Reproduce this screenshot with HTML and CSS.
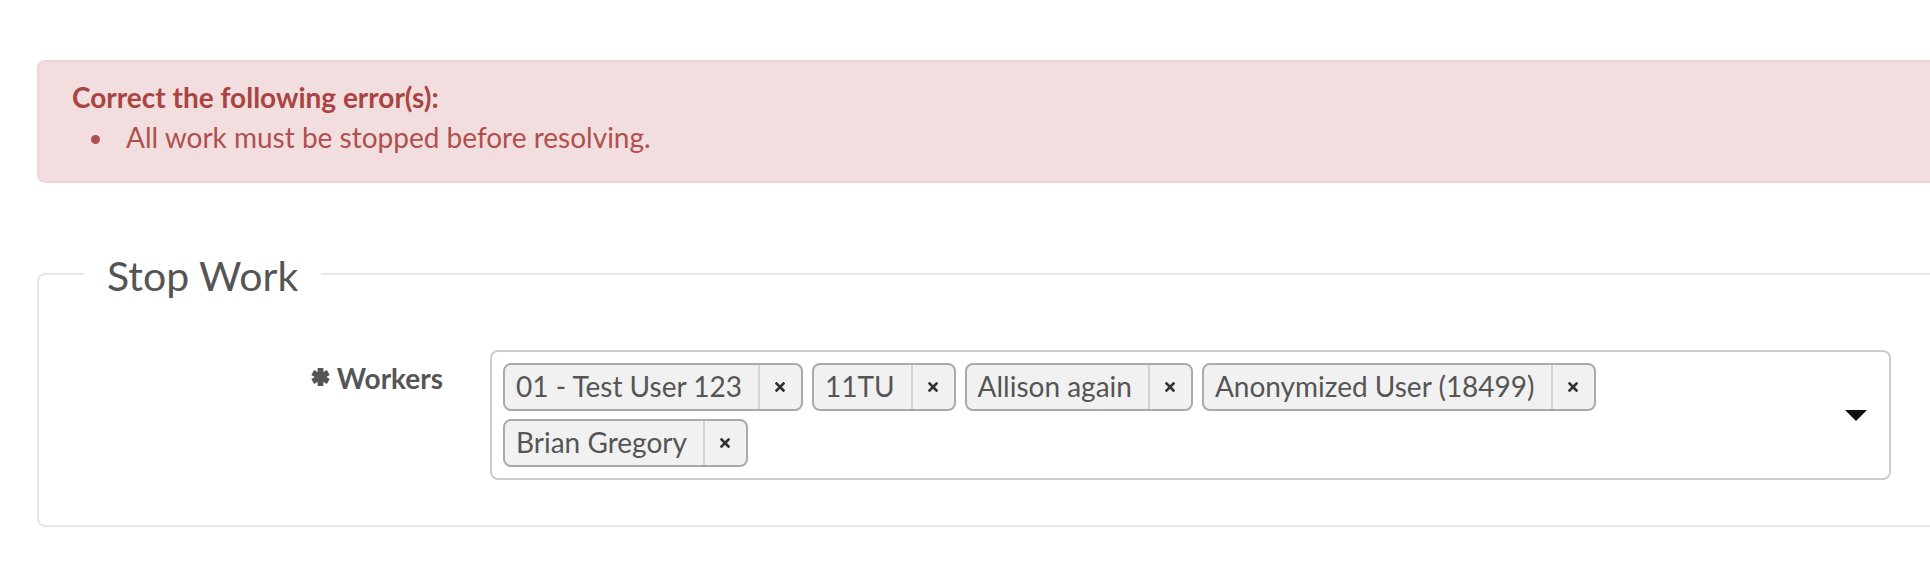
FILE: index.html
```html
<!DOCTYPE html>
<html lang="en">
<head>
<meta charset="utf-8">
<title>Stop Work</title>
<link rel="stylesheet" href="styles.css">
</head>
<body>
<div class="page">
  <div class="alert">
    <div class="alert-title">Correct the following error(s):</div>
    <ul class="alert-list">
      <li>All work must be stopped before resolving.</li>
    </ul>
  </div>

  <fieldset class="panel">
    <legend class="panel-title">Stop Work</legend>
    <div class="form-row">
      <label class="form-label">
        <svg class="req-icon" viewBox="0 0 20 20" width="19" height="20" aria-hidden="true">
          <g stroke="#555" stroke-width="6">
            <line x1="10" y1="0.5" x2="10" y2="19.5"/>
            <line x1="1.8" y1="5.25" x2="18.2" y2="14.75"/>
            <line x1="1.8" y1="14.75" x2="18.2" y2="5.25"/>
          </g>
        </svg><span class="form-label-text">Workers</span>
      </label>
      <div class="multi-select">
        <ul class="chips">
          <li class="chip"><span class="chip-text">01 - Test User 123</span><span class="chip-remove"><svg viewBox="0 0 10 10" width="10" height="10"><path d="M1.5 1.5L8.5 8.5M8.5 1.5L1.5 8.5" stroke="#333" stroke-width="2.6" stroke-linecap="square"/></svg></span></li>
          <li class="chip"><span class="chip-text">11TU</span><span class="chip-remove"><svg viewBox="0 0 10 10" width="10" height="10"><path d="M1.5 1.5L8.5 8.5M8.5 1.5L1.5 8.5" stroke="#333" stroke-width="2.6" stroke-linecap="square"/></svg></span></li>
          <li class="chip"><span class="chip-text">Allison again</span><span class="chip-remove"><svg viewBox="0 0 10 10" width="10" height="10"><path d="M1.5 1.5L8.5 8.5M8.5 1.5L1.5 8.5" stroke="#333" stroke-width="2.6" stroke-linecap="square"/></svg></span></li>
          <li class="chip"><span class="chip-text">Anonymized User (18499)</span><span class="chip-remove"><svg viewBox="0 0 10 10" width="10" height="10"><path d="M1.5 1.5L8.5 8.5M8.5 1.5L1.5 8.5" stroke="#333" stroke-width="2.6" stroke-linecap="square"/></svg></span></li>
          <li class="chip"><span class="chip-text">Brian Gregory</span><span class="chip-remove"><svg viewBox="0 0 10 10" width="10" height="10"><path d="M1.5 1.5L8.5 8.5M8.5 1.5L1.5 8.5" stroke="#333" stroke-width="2.6" stroke-linecap="square"/></svg></span></li>
        </ul>
        <span class="caret"></span>
      </div>
    </div>
  </fieldset>
</div>
</body>
</html>
```
FILE: styles.css
```css
html, body {
  margin: 0;
  padding: 0;
  overflow: hidden;
  background: #fff;
}

body {
  font-family: Lato, "Open Sans", sans-serif;
  font-size: 28px;
  line-height: 40px;
  color: #555;
}

.page {
  padding: 60px 0 0 37px;
  margin-right: -40px;
}

/* Error alert */
.alert {
  background: #f2dede;
  border: 2px solid #eed3d7;
  border-radius: 8px;
  color: #a94442;
  padding: 15px 33px 24px;
}

.alert-title {
  font-weight: 700;
}

.alert-list {
  margin: 0;
  padding-left: 44px;
  list-style: disc;
}

.alert-list li {
  padding-left: 10px;
  color: #b0504e;
}

/* Fieldset panel */
.panel {
  margin: 67px 0 0;
  padding: 52px 77px 45px 45px;
  border: 2px solid #e6e6e6;
  border-radius: 8px;
  min-width: 0;
}

.panel-title {
  padding: 4px 23px 0;
  font-size: 41px;
  line-height: 44px;
  color: #555;
}

.form-row {
  display: flex;
  align-items: flex-start;
}

.form-label {
  box-sizing: border-box;
  width: 406px;
  padding: 8px 47px 0 0;
  text-align: right;
  font-weight: 700;
  color: #555;
}

.req-icon {
  vertical-align: 2px;
  margin-right: 7px;
}

.multi-select {
  flex: 1;
  display: flex;
  align-items: center;
  border: 2px solid #cccccc;
  border-radius: 8px;
  padding: 11px;
  background: #fff;
}

.chips {
  flex: 1;
  display: flex;
  flex-wrap: wrap;
  gap: 8px 9px;
  margin: 0 40px 0 0;
  padding: 0;
  list-style: none;
}

.chip {
  display: flex;
  box-sizing: border-box;
  height: 48px;
  border: 2px solid #aaaaaa;
  border-radius: 8px;
  background: #f1f1f1;
  color: #555;
}

.chip-text {
  padding: 0 16px 2px 11px;
  line-height: 42px;
  white-space: nowrap;
}

.chip-remove {
  display: flex;
  align-items: center;
  justify-content: center;
  width: 41px;
  border-left: 2px solid #d4d4d4;
}

.chip-remove svg {
  display: block;
}

.caret {
  width: 0;
  height: 0;
  border-top: 11px solid #111;
  border-left: 11px solid transparent;
  border-right: 11px solid transparent;
  margin: 0 11px 0 auto;
}
```
